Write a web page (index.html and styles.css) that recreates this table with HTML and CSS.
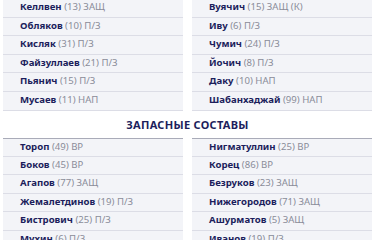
FILE: index.html
```html
<!DOCTYPE html>
<html lang="ru">
<head>
<meta charset="utf-8">
<link rel="stylesheet" href="styles.css">
</head>
<body>
<div class="page">
  <div class="lineup first">
    <ul class="col">
      <li><b>Келлвен</b> (13) ЗАЩ</li>
      <li><b>Обляков</b> (10) П/З</li>
      <li><b>Кисляк</b> (31) П/З</li>
      <li><b>Файзуллаев</b> (21) П/З</li>
      <li><b>Пьянич</b> (15) П/З</li>
      <li><b>Мусаев</b> (11) НАП</li>
    </ul>
    <ul class="col">
      <li><b>Вуячич</b> (15) ЗАЩ (К)</li>
      <li><b>Иву</b> (6) П/З</li>
      <li><b>Чумич</b> (24) П/З</li>
      <li><b>Йочич</b> (8) П/З</li>
      <li><b>Даку</b> (10) НАП</li>
      <li><b>Шабанхаджай</b> (99) НАП</li>
    </ul>
  </div>
  <h2 class="title">Запасные составы</h2>
  <div class="lineup subs">
    <ul class="col">
      <li><b>Тороп</b> (49) ВР</li>
      <li><b>Боков</b> (45) ВР</li>
      <li><b>Агапов</b> (77) ЗАЩ</li>
      <li><b>Жемалетдинов</b> (19) П/З</li>
      <li><b>Бистрович</b> (25) П/З</li>
      <li><b>Мухин</b> (6) П/З</li>
    </ul>
    <ul class="col">
      <li><b>Нигматуллин</b> (25) ВР</li>
      <li><b>Корец</b> (86) ВР</li>
      <li><b>Безруков</b> (23) ЗАЩ</li>
      <li><b>Нижегородов</b> (71) ЗАЩ</li>
      <li><b>Ашурматов</b> (5) ЗАЩ</li>
      <li><b>Иванов</b> (19) П/З</li>
    </ul>
  </div>
</div>
</body>
</html>
```
FILE: styles.css
```css
* { box-sizing: border-box; }
html, body { margin: 0; padding: 0; background: #fff; }
body {
  font-family: "Noto Sans", "DejaVu Sans", sans-serif;
  overflow: hidden;
}
.page { padding: 0 3px; }
.lineup {
  display: grid;
  grid-template-columns: 1fr 1fr;
  column-gap: 9px;
}
.first { margin-top: -1px; }
.col {
  list-style: none;
  margin: 0;
  padding: 0;
  background: #f3f4f8;
}
.subs .col { border-top: 1px solid #a9abb8; }
.subs .col li { height: 18.4px; }
.col li {
  height: 18.6px;
  line-height: 16.5px;
  padding-left: 17px;
  font-size: 9.6px;
  color: #8a8c99;
  border-bottom: 1px solid #dcdde6;
  white-space: nowrap;
}
.col li b {
  color: #1c1e5c;
  font-weight: 700;
}
.title {
  margin: 0;
  height: 27px;
  padding-top: 6px;
  text-align: center;
  text-transform: uppercase;
  font-size: 11px;
  font-weight: 700;
  color: #1c1e5c;
  letter-spacing: 0.3px;
}
```
